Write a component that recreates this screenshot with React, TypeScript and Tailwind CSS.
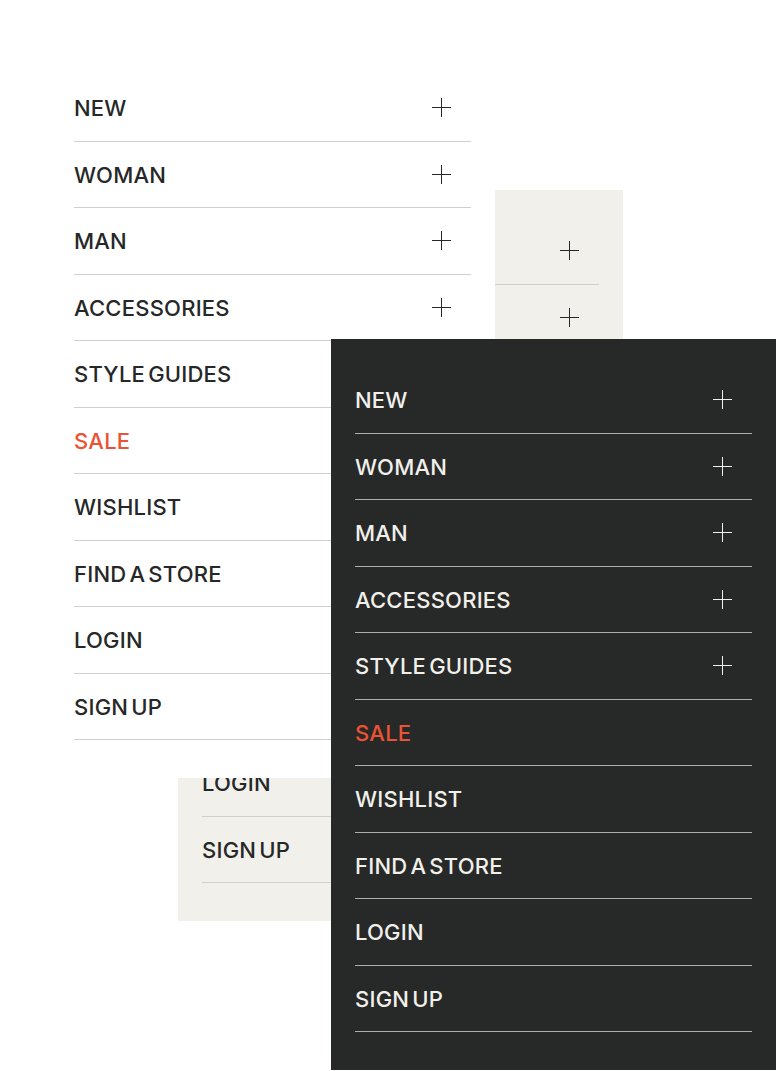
const items = [
  { label: "NEW", plus: true },
  { label: "WOMAN", plus: true },
  { label: "MAN", plus: true },
  { label: "ACCESSORIES", plus: true },
  { label: "STYLE GUIDES", plus: true },
  { label: "SALE", plus: false, sale: true },
  { label: "WISHLIST", plus: false },
  { label: "FIND A STORE", plus: false },
  { label: "LOGIN", plus: false },
  { label: "SIGN UP", plus: false },
];

type Theme = "light" | "beige" | "dark";

function Plus({ dark }: { dark: boolean }) {
  return (
    <svg width="19" height="19" viewBox="0 0 19 19" className="mr-[20px] mb-0.5 shrink-0">
      <path d="M9.5 0V19M0 9.5H19" stroke={dark ? "#f1f0eb" : "#262727"} strokeWidth="1" fill="none" />
    </svg>
  );
}

function Menu({ theme }: { theme: Theme }) {
  const dark = theme === "dark";
  return (
    <ul className="flex flex-col">
      {items.map((it) => (
        <li
          key={it.label}
          className={
            "flex h-[66.5px] items-center justify-between border-b pt-[2px] " +
            (dark ? "border-[#aeaeac]" : "border-[#cfcfcf]")
          }
        >
          <span
            className={
              "text-[22px] font-medium tracking-[0.01em] [word-spacing:-3px] " +
              (it.sale ? "text-[#ea5333]" : dark ? "text-[#f1f0eb]" : "text-[#262727]")
            }
          >
            {it.label}
          </span>
          {it.plus && <Plus dark={dark} />}
        </li>
      ))}
    </ul>
  );
}

export default function App() {
  return (
    <div className="relative h-[1071px] w-[777px] overflow-hidden bg-white font-['Inter',sans-serif]">
      <div className="absolute left-[178px] top-[190px] w-[445px] bg-[#f1f0eb] px-6 pt-[28px] pb-[38px]">
        <Menu theme="beige" />
      </div>
      <div className="absolute left-[50px] top-[47px] w-[445px] bg-white px-6 pt-[28px] pb-[38px]">
        <Menu theme="light" />
      </div>
      <div className="absolute left-[331px] top-[339px] w-[445px] bg-[#272828] px-6 pt-[28px] pb-[38px]">
        <Menu theme="dark" />
      </div>
    </div>
  );
}
